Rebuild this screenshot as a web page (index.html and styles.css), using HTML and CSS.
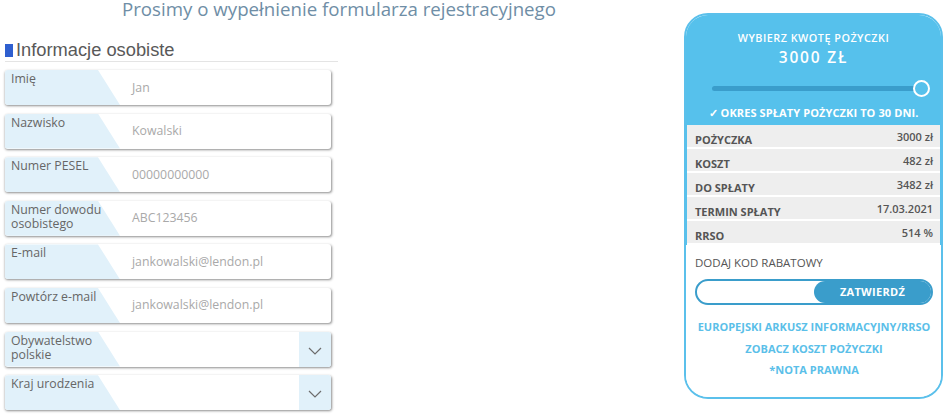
FILE: index.html
```html
<!DOCTYPE html>
<html lang="pl">
<head>
<meta charset="utf-8">
<title>Formularz rejestracyjny</title>
<link rel="stylesheet" href="styles.css">
</head>
<body>
<div class="page">
  <main class="left">
    <h1 class="title">Prosimy o wypełnienie formularza rejestracyjnego</h1>
    <section class="personal">
      <h2 class="section-title"><span class="marker"></span>Informacje osobiste</h2>
      <div class="fields">
        <div class="field"><div class="label"><span>Imię</span></div><div class="value">Jan</div></div>
        <div class="field"><div class="label"><span>Nazwisko</span></div><div class="value">Kowalski</div></div>
        <div class="field"><div class="label"><span>Numer PESEL</span></div><div class="value">00000000000</div></div>
        <div class="field"><div class="label"><span>Numer dowodu osobistego</span></div><div class="value">ABC123456</div></div>
        <div class="field"><div class="label"><span>E-mail</span></div><div class="value">jankowalski@lendon.pl</div></div>
        <div class="field"><div class="label"><span>Powtórz e-mail</span></div><div class="value">jankowalski@lendon.pl</div></div>
        <div class="field select"><div class="label"><span>Obywatelstwo polskie</span></div><div class="value"></div>
          <div class="chevron"><svg width="14" height="8" viewBox="0 0 14 8"><polyline points="1,1 7,7 13,1" fill="none" stroke="#6d6d6d" stroke-width="1.2"/></svg></div></div>
        <div class="field select"><div class="label"><span>Kraj urodzenia</span></div><div class="value"></div>
          <div class="chevron"><svg width="14" height="8" viewBox="0 0 14 8"><polyline points="1,1 7,7 13,1" fill="none" stroke="#6d6d6d" stroke-width="1.2"/></svg></div></div>
      </div>
    </section>
  </main>
  <aside class="calc">
    <div class="calc-top">
      <div class="calc-heading">WYBIERZ KWOTĘ POŻYCZKI</div>
      <div class="calc-amount">3000 ZŁ</div>
      <div class="slider"><div class="track"></div><div class="thumb"></div></div>
      <div class="calc-note">✓ OKRES SPŁATY POŻYCZKI TO 30 DNI.</div>
      <div class="summary">
        <div class="row"><span class="k">POŻYCZKA</span><span class="v">3000 zł</span></div>
        <div class="row"><span class="k">KOSZT</span><span class="v">482 zł</span></div>
        <div class="row"><span class="k">DO SPŁATY</span><span class="v">3482 zł</span></div>
        <div class="row"><span class="k">TERMIN SPŁATY</span><span class="v">17.03.2021</span></div>
        <div class="row"><span class="k">RRSO</span><span class="v">514 %</span></div>
      </div>
    </div>
    <div class="calc-bottom">
      <div class="promo-label">DODAJ KOD RABATOWY</div>
      <div class="promo"><div class="promo-input"></div><div class="promo-btn">ZATWIERDŹ</div></div>
      <div class="links">
        <a class="link">EUROPEJSKI ARKUSZ INFORMACYJNY/RRSO</a>
        <a class="link">ZOBACZ KOSZT POŻYCZKI</a>
        <a class="link">*NOTA PRAWNA</a>
      </div>
    </div>
  </aside>
</div>
</body>
</html>
```
FILE: styles.css
```css
* { box-sizing: border-box; }
html, body { margin: 0; padding: 0; background: #fff; }
body { font-family: "Open Sans", "Liberation Sans", sans-serif; overflow: hidden; }

.page { display: flex; gap: 6px; width: 950px; height: 415px; }

.left { width: 678px; padding-left: 5px; }
.title {
  margin: 0;
  font-size: 18.7px; line-height: 17px; font-weight: 400;
  color: #6f8ea6; text-align: center;
  padding-right: 5px;
}
.personal { width: 333px; }
.section-title {
  display: flex; align-items: center; gap: 3px;
  margin: 24px 0 0 0; padding-bottom: 2px;
  border-bottom: 1px solid #e4e4e4;
  font-family: "Liberation Sans", Arial, sans-serif;
  font-size: 18.3px; line-height: 18px; font-weight: 400; color: #595959;
}
.marker { display: inline-block; width: 8px; height: 13px; background: #2f5fcf; }

.fields { display: flex; flex-direction: column; gap: 8.6px; margin-top: 8px; width: 326px; }
.field {
  position: relative; display: flex; height: 35px;
  background: #fff; border-radius: 3px; overflow: hidden;
  box-shadow: 0.5px 1px 2.5px rgba(0,0,0,0.45);
}
.label {
  flex: 0 0 115px; height: 100%;
  background: #e1f1fa;
  clip-path: polygon(0 0, 93px 0, 115px 100%, 0 100%);
  padding: 2px 0 0 6px;
  font-size: 12.3px; line-height: 14px; color: #666;
}
.label span { display: block; width: 100px; }
.value {
  flex: 1; padding: 10.5px 0 0 12px;
  font-size: 12.3px; line-height: 14px; color: #a9a9a9;
}
.chevron {
  flex: 0 0 32px; background: #e1f1fa;
  display: flex; align-items: center; justify-content: center; padding-top: 3px;
}

.calc {
  width: 259px; height: 386px; margin-top: 13px;
  border: 2px solid #5bc0eb; border-radius: 24px; overflow: hidden;
  display: flex; flex-direction: column;
}
.calc-top { background: #56c1ec; padding: 16px 1px 0 1px; color: #fff; text-align: center; }
.calc-heading { font-size: 10.8px; line-height: 14px; font-weight: 600; letter-spacing: 0.5px; }
.calc-amount { margin-top: 2px; font-size: 15.5px; line-height: 20px; font-weight: 600; letter-spacing: 1.8px; }
.slider { position: relative; height: 18px; margin: 12px 0 0 0; }
.track { position: absolute; left: 25px; right: 20px; top: 6.5px; height: 5px; border-radius: 3px; background: #3a9dcb; }
.thumb {
  position: absolute; left: 226px; top: 1px; width: 17px; height: 17px;
  border: 2px solid #fff; border-radius: 50%; background: #56c1ec;
}
.calc-note { margin-top: 9px; font-size: 11px; line-height: 14px; font-weight: 700; letter-spacing: 0.1px; }
.summary { margin-top: 5px; }
.row {
  display: flex; justify-content: space-between; height: 24px;
  background: #eeeeee; border-bottom: 2px solid #fff;
  padding: 0 7px 0 8px; color: #555; font-size: 11px; line-height: 14px;
}
.row .k { margin-top: 8px; font-weight: 700; }
.row .v { margin-top: 5px; font-weight: 600; }

.calc-bottom { flex: 1; background: #fff; padding: 11px 8px 0 9px; }
.promo-label { font-size: 11.5px; line-height: 14px; color: #555; }
.promo {
  display: flex; height: 26px; margin-top: 9px;
  border: 2px solid #3a9dcb; border-radius: 13px; overflow: hidden;
}
.promo-input { flex: 1; }
.promo-btn {
  flex: 0 0 117px; background: #3a9dcb; color: #fff; border-radius: 12px 0 0 12px;
  font-size: 11px; font-weight: 700; line-height: 22px; text-align: center; letter-spacing: 0.3px;
}
.links { display: flex; flex-direction: column; align-items: center; margin: 11px -8px 0 -8px; }
.link {
  font-size: 11px; line-height: 21.5px; font-weight: 700; color: #5bbfe9;
  text-decoration: none; white-space: nowrap;
}
```
